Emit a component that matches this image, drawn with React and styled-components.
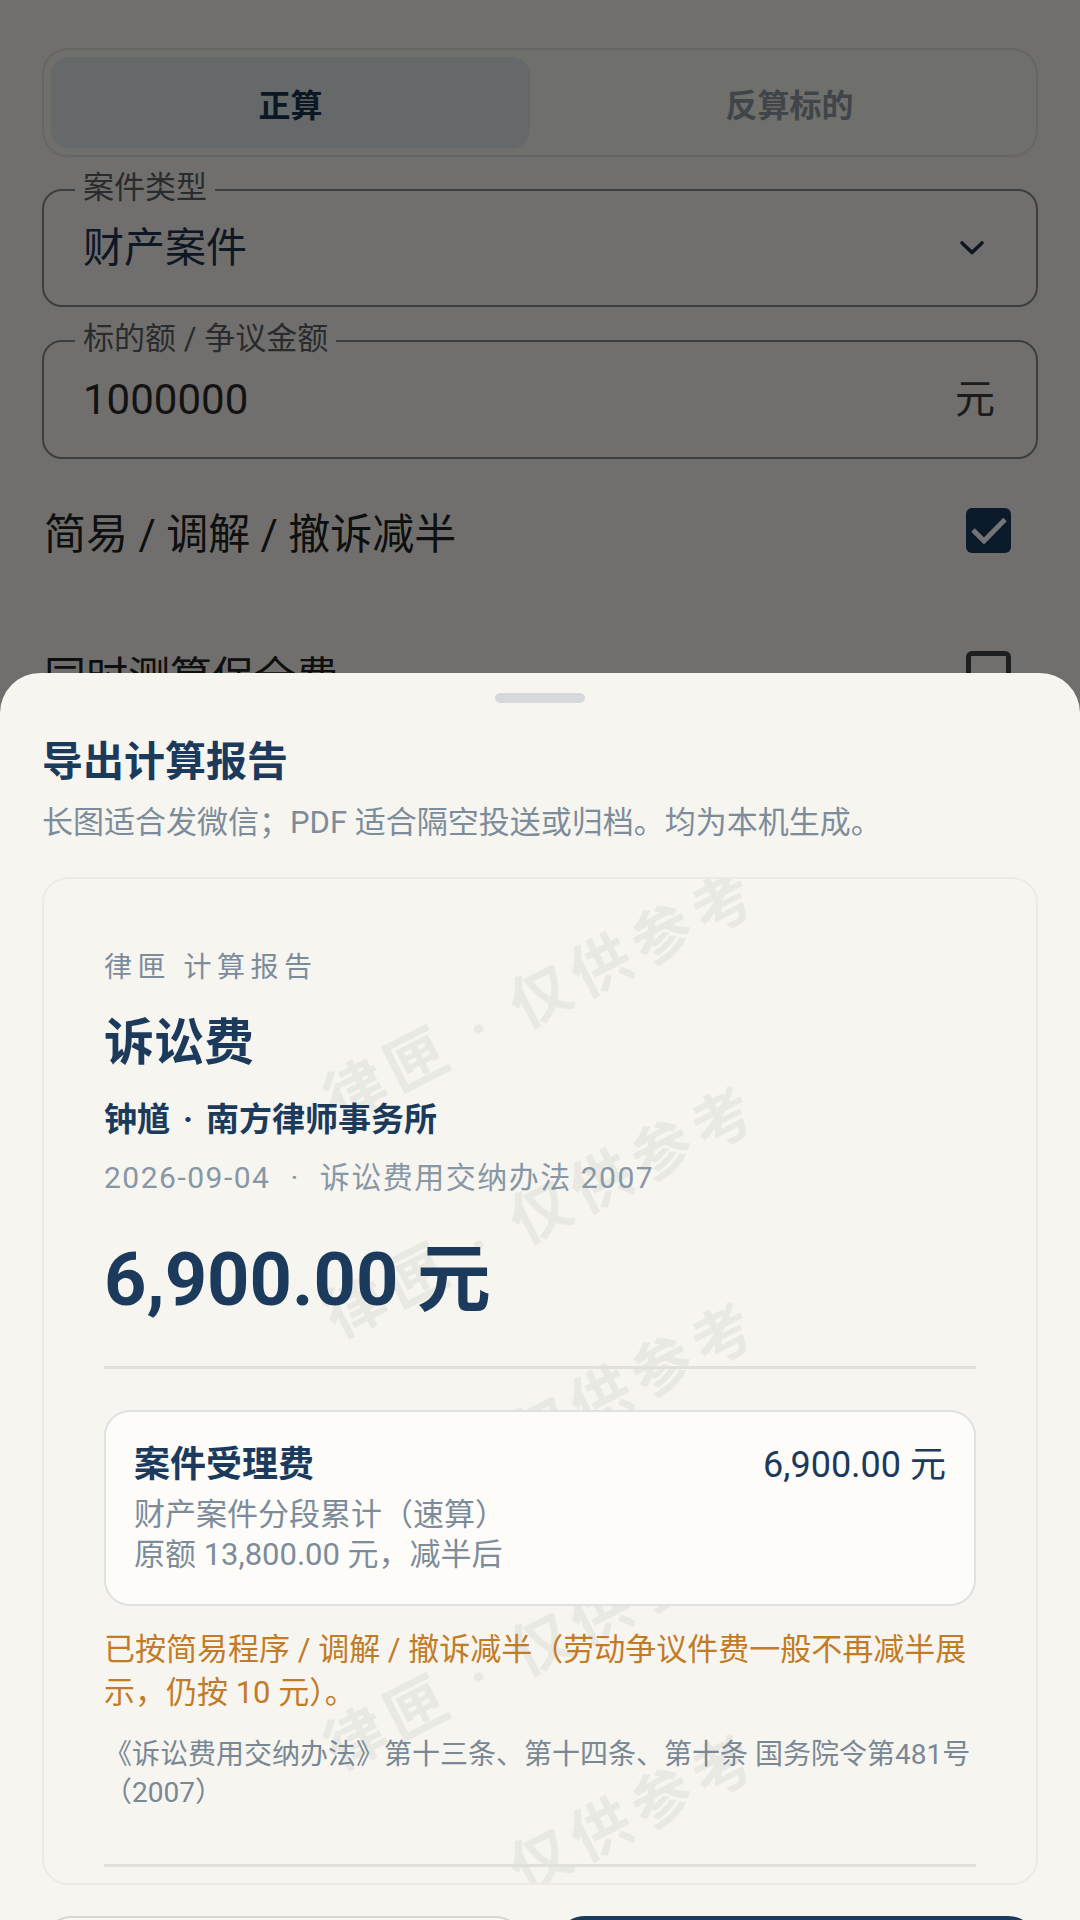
import React from 'react';
import styled, { createGlobalStyle } from 'styled-components';

const GlobalStyle = createGlobalStyle`
  * { box-sizing: border-box; }
  html, body {
    margin: 0;
    padding: 0;
    background: #f7f5ef;
  }
  body {
    font-family: Roboto, "Noto Sans CJK SC", sans-serif;
    -webkit-font-smoothing: antialiased;
  }
`;

const marks = [112, 328, 544, 760, 976];

export default function App() {
  return (
    <>
      <GlobalStyle />
      <Screen>
        <Page>
          <Segmented>
            <SegButton $active>正算</SegButton>
            <SegButton>反算标的</SegButton>
          </Segmented>

          <Field $mt={32} $h={118} $pr={51}>
            <FieldLabel>案件类型</FieldLabel>
            <FieldValue $size={41} $color="#1f3553">财产案件</FieldValue>
            <svg width="26" height="16" viewBox="0 0 26 16">
              <polyline points="3,3 13,12.5 23,3" fill="none" stroke="#1b2f4a" strokeWidth="3.6" strokeLinecap="round" strokeLinejoin="round" />
            </svg>
          </Field>

          <Field $mt={33} $h={119} $pr={41}>
            <FieldLabel>标的额 / 争议金额</FieldLabel>
            <FieldValue $size={42} $color="#2b2b2b">1000000</FieldValue>
            <Suffix>元</Suffix>
          </Field>

          <ToggleRow>
            <ToggleText>简易 / 调解 / 撤诉减半</ToggleText>
            <Checkbox $checked>
              <svg width="45" height="45" viewBox="0 0 45 45">
                <polyline points="7,22 18,33 39,11.5" fill="none" stroke="#ffffff" strokeWidth="5" />
              </svg>
            </Checkbox>
          </ToggleRow>
          <ToggleRow>
            <ToggleText>同时测算保全费</ToggleText>
            <Checkbox />
          </ToggleRow>
        </Page>

        <Scrim />

        <Sheet>
          <Handle />
          <SheetTitle>导出计算报告</SheetTitle>
          <SheetHint>长图适合发微信；PDF 适合隔空投送或归档。均为本机生成。</SheetHint>

          <ReportCard>
            <Watermarks aria-hidden="true">
              {marks.map((top) => (
                <Mark key={top} $top={top}>律匣 · 仅供参考</Mark>
              ))}
            </Watermarks>
            <ReportBody>
              <Kicker>律匣 计算报告</Kicker>
              <ReportTitle>诉讼费</ReportTitle>
              <Firm>钟馗<FirmDot>·</FirmDot>南方律师事务所</Firm>
              <Meta>2026-09-04<MetaDot>·</MetaDot>诉讼费用交纳办法 2007</Meta>
              <Total>6,900.00 元</Total>
              <Divider $mt={41} />
              <ItemCard>
                <ItemHead>
                  <ItemName>案件受理费</ItemName>
                  <ItemAmount>6,900.00 元</ItemAmount>
                </ItemHead>
                <ItemNote>财产案件分段累计（速算）</ItemNote>
                <ItemNote>原额 13,800.00 元，减半后</ItemNote>
              </ItemCard>
              <Warning>已按简易程序 / 调解 / 撤诉减半（劳动争议件费一般不再减半展示，仍按 10 元）。</Warning>
              <Citation>《诉讼费用交纳办法》第十三条、第十四条、第十条 国务院令第481号（2007）</Citation>
              <Divider $mt={52} />
            </ReportBody>
          </ReportCard>

          <Actions>
            <ActionButton />
            <ActionButton $primary />
          </Actions>
        </Sheet>
      </Screen>
    </>
  );
}

const Screen = styled.div`
  position: relative;
  width: 1080px;
  height: 1920px;
  overflow: hidden;
  background: #f7f5ef;
`;

const Page = styled.div`
  display: flex;
  flex-direction: column;
  padding: 48px 42px 0;
`;

const Segmented = styled.div`
  display: flex;
  gap: 20px;
  height: 109px;
  padding: 7px;
  border: 2px solid #e3e1d9;
  border-radius: 26px;
  background: #f5f3ed;
`;

const SegButton = styled.div`
  flex: 1;
  display: flex;
  align-items: center;
  justify-content: center;
  border-radius: 18px;
  font-size: 32px;
  font-weight: 700;
  color: ${(p) => (p.$active ? '#1b3450' : '#8e99a4')};
  background: ${(p) => (p.$active ? '#dfe6e9' : 'transparent')};
`;

const Field = styled.div`
  position: relative;
  display: flex;
  align-items: center;
  margin-top: ${(p) => p.$mt}px;
  height: ${(p) => p.$h}px;
  padding: 0 ${(p) => p.$pr}px 0 39px;
  border: 2px solid #85878a;
  border-radius: 20px;
`;

const FieldLabel = styled.span`
  position: absolute;
  left: 31px;
  top: -21px;
  padding: 0 8px;
  background: #f7f5ef;
  font-size: 31px;
  line-height: 36px;
  color: #5b5f64;
`;

const FieldValue = styled.span`
  flex: 1;
  font-size: ${(p) => p.$size}px;
  line-height: 54px;
  color: ${(p) => p.$color};
`;

const Suffix = styled.span`
  font-size: 40px;
  line-height: 54px;
  color: #3d3f42;
`;

const ToggleRow = styled.div`
  display: flex;
  align-items: center;
  justify-content: space-between;
  height: 143px;
  padding: 0 27px 0 2px;
`;

const ToggleText = styled.span`
  font-size: 42px;
  color: #202122;
`;

const Checkbox = styled.span`
  display: flex;
  align-items: center;
  justify-content: center;
  width: 45px;
  height: 45px;
  border-radius: 6px;
  background: ${(p) => (p.$checked ? '#18395c' : 'transparent')};
  border: ${(p) => (p.$checked ? 'none' : '5px solid #3f4246')};
`;

const Scrim = styled.div`
  position: absolute;
  inset: 0;
  background: rgba(0, 0, 0, 0.545);
`;

const Sheet = styled.div`
  position: absolute;
  top: 673px;
  left: 0;
  right: 0;
  bottom: 0;
  display: flex;
  flex-direction: column;
  padding: 0 42px;
  background: #f7f5ef;
  border-radius: 40px 40px 0 0;

  & > * {
    flex-shrink: 0;
  }
`;

const Handle = styled.div`
  align-self: center;
  width: 90px;
  height: 10px;
  margin-top: 20px;
  border-radius: 5px;
  background: #d5d9dc;
`;

const SheetTitle = styled.h2`
  margin: 31px 0 0;
  font-size: 41px;
  line-height: 56px;
  font-weight: 700;
  color: #1b3a5c;
`;

const SheetHint = styled.p`
  margin: 12px 0 0;
  font-size: 31px;
  line-height: 42px;
  color: #7d8c9b;
  white-space: nowrap;
`;

const ReportCard = styled.div`
  position: relative;
  margin-top: 33px;
  height: 1008px;
  overflow: hidden;
  border: 2px solid #eeebe4;
  border-radius: 26px;
  background: #f7f5ef;
`;

const Watermarks = styled.div`
  position: absolute;
  inset: 0;
  pointer-events: none;
`;

const Mark = styled.div`
  position: absolute;
  left: 50%;
  top: ${(p) => p.$top}px;
  transform: translate(-50%, -50%) rotate(-27deg);
  white-space: nowrap;
  font-size: 60px;
  font-weight: 700;
  letter-spacing: 8px;
  color: rgba(120, 132, 130, 0.1);
`;

const ReportBody = styled.div`
  position: relative;
  display: flex;
  flex-direction: column;
  padding: 69px 60px 0;
`;

const Kicker = styled.div`
  font-size: 28px;
  line-height: 40px;
  letter-spacing: 5.5px;
  color: #7d8c9b;
`;

const ReportTitle = styled.div`
  margin-top: 23px;
  font-size: 50px;
  line-height: 64px;
  font-weight: 700;
  color: #1b3a5c;
`;

const Firm = styled.div`
  margin-top: 23px;
  font-size: 33px;
  line-height: 44px;
  font-weight: 700;
  color: #1b3a5c;
`;

const FirmDot = styled.span`
  margin: 0 13px;
`;

const Meta = styled.div`
  margin-top: 15px;
  font-size: 30px;
  line-height: 42px;
  letter-spacing: 1.5px;
  color: #8797a6;
`;

const MetaDot = styled.span`
  margin: 0 20px;
`;

const Total = styled.div`
  margin-top: 36px;
  font-size: 74px;
  line-height: 90px;
  font-weight: 700;
  color: #1b3a5c;
`;

const Divider = styled.div`
  margin-top: ${(p) => p.$mt}px;
  height: 3px;
  background: #e1e0db;
`;

const ItemCard = styled.div`
  margin-top: 41px;
  padding: 30px 28px 29px 28px;
  border: 2px solid #dfe2e3;
  border-radius: 26px;
  background: #fdfcf9;
`;

const ItemHead = styled.div`
  display: flex;
  align-items: center;
  justify-content: space-between;
  margin-bottom: 7px;
`;

const ItemName = styled.span`
  font-size: 36px;
  line-height: 46px;
  font-weight: 700;
  color: #1b3a5c;
`;

const ItemAmount = styled.span`
  font-size: 36px;
  line-height: 46px;
  color: #1b3a5c;
`;

const ItemNote = styled.div`
  font-size: 31px;
  line-height: 40px;
  color: #7d8c9b;
`;

const Warning = styled.p`
  margin: 22px 0 0;
  font-size: 31px;
  line-height: 43px;
  color: #c27b26;
`;

const Citation = styled.p`
  margin: 22px 0 0;
  font-size: 28px;
  line-height: 38px;
  color: #7a8896;
`;

const Actions = styled.div`
  display: flex;
  gap: 30px;
  margin-top: 31px;
`;

const ActionButton = styled.div`
  flex: 1;
  height: 130px;
  border-radius: 30px;
  background: ${(p) => (p.$primary ? '#1b3a5c' : '#fbfaf6')};
  border: 2px solid ${(p) => (p.$primary ? '#1b3a5c' : '#d7d6d0')};
`;
